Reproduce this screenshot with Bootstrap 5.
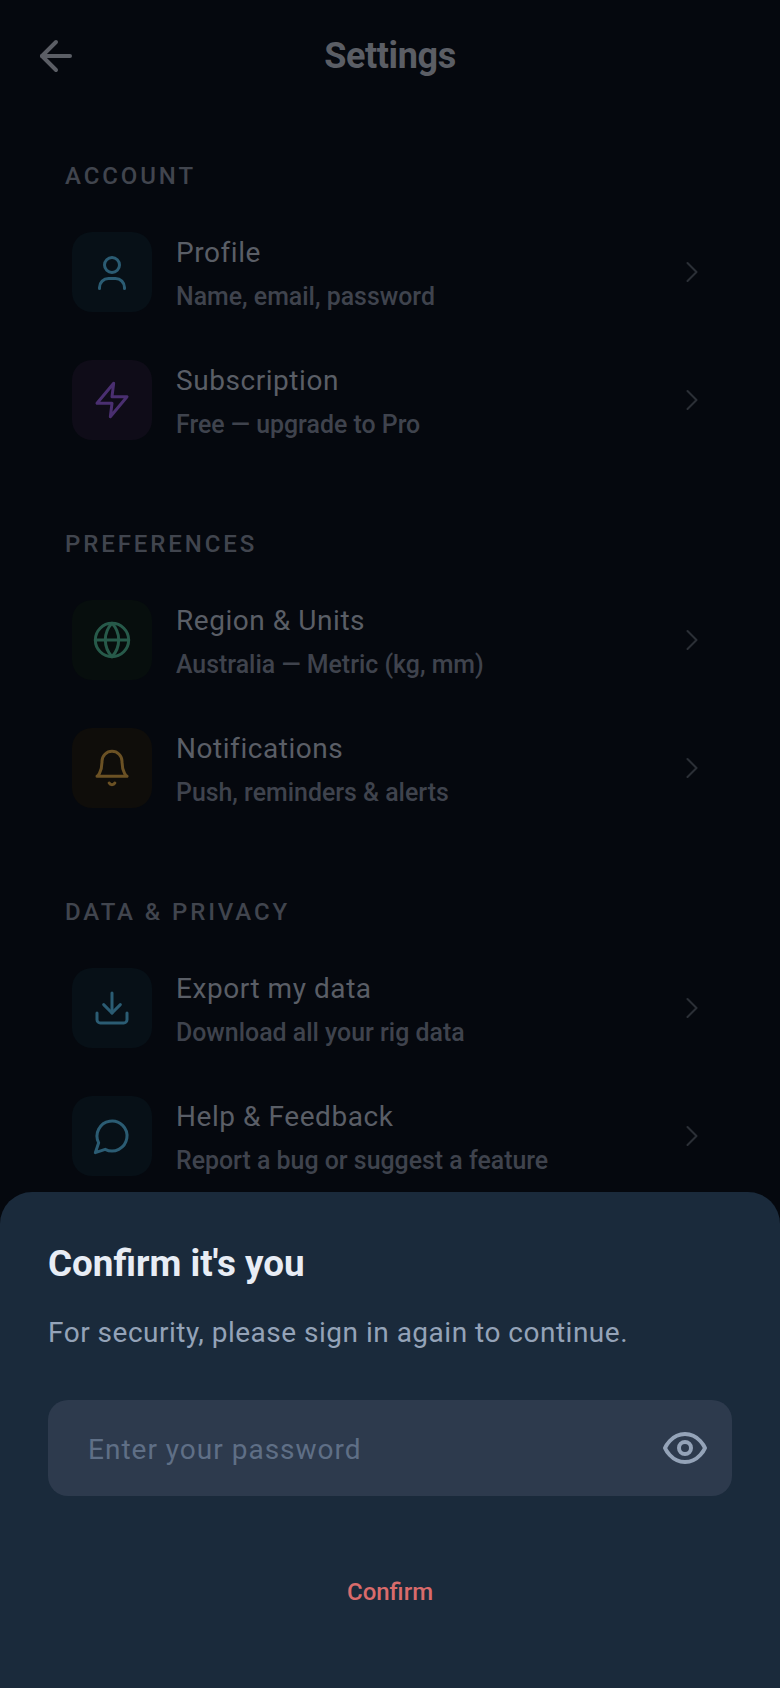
<!DOCTYPE html>
<html lang="en">
<head>
  <meta charset="UTF-8" />
  <meta name="viewport" content="width=device-width, initial-scale=1.0"/>
  <title>Settings</title>

  <link href="https://cdn.jsdelivr.net/npm/bootstrap@5.3.3/dist/css/bootstrap.min.css" rel="stylesheet"/>

  <style>
    html, body {
      height: 100%;
    }

    body {
      background: #05080e;
      font-family: Roboto, "Liberation Sans", sans-serif;
      overflow: hidden;
    }

    .screen {
      height: 1688px;
      overflow: hidden;
    }

    /* top bar */
    .top-bar {
      height: 112px;
      padding: 0 32px;
    }

    .top-title {
      color: #5b5e65;
      font-size: 36px;
      font-weight: 700;
      letter-spacing: -.4px;
      line-height: 40px;
      margin: 0;
    }

    .bar-side {
      width: 48px;
      height: 48px;
    }

    .back-icon {
      color: #5b5e65;
    }

    /* settings list */
    .settings-group {
      padding: 0 70px 0 65px;
      margin-bottom: 64px;
    }

    .settings-group:first-of-type {
      margin-top: 48px;
    }

    .group-label {
      color: #41454e;
      font-size: 24px;
      font-weight: 500;
      letter-spacing: 2.9px;
      line-height: 32px;
      margin-bottom: 16px;
    }

    .setting-row {
      height: 128px;
      padding-left: 7px;
      gap: 24px;
    }

    .tile {
      width: 80px;
      height: 80px;
      border-radius: 20px;
      flex-shrink: 0;
    }

    .tile-cyan { background: #071017; color: #2b5c73; }
    .tile-purple { background: #0f0c18; color: #4a2f70; }
    .tile-green { background: #070e0d; color: #275a4a; }
    .tile-amber { background: #0f0d0a; color: #6b5124; }

    .row-title {
      color: #5a5e66;
      font-size: 28px;
      line-height: 36px;
      letter-spacing: .55px;
      padding-top: 3px;
    }

    .row-sub {
      color: #3f434d;
      font-size: 24.9px;
      font-weight: 500;
      line-height: 32px;
      margin-top: 10px;
    }

    .chevron {
      color: #2b2f36;
      flex-shrink: 0;
    }

    /* password sheet */
    .scrim-sheet {
      height: 496px;
      background: #1a2a3b;
      border-radius: 32px 32px 0 0;
      padding: 48px 48px 0;
    }

    .sheet-title {
      color: #e8edf5;
      font-size: 36.8px;
      font-weight: 700;
      line-height: 48px;
      margin-bottom: 25px;
    }

    .sheet-text {
      color: #94a3b8;
      font-size: 28px;
      line-height: 40px;
      letter-spacing: .5px;
      margin-bottom: 47px;
    }

    .pass-field {
      height: 96px;
      background: #2d3a4d;
      border-radius: 20px;
      padding: 0 23px 0 40px;
    }

    .pass-input,
    .pass-input:focus {
      background: transparent;
      border: 0;
      box-shadow: none;
      color: #e8edf5;
      font-size: 28px;
      letter-spacing: 1px;
      padding: 3px 0 0;
    }

    .pass-input::placeholder {
      color: #5f6f86;
      opacity: 1;
    }

    .eye-icon {
      color: #94a3b8;
      flex-shrink: 0;
    }

    .confirm-btn,
    .confirm-btn:hover {
      color: #d96b6b;
      font-size: 24px;
      font-weight: 500;
      line-height: 32px;
      margin-top: 64px;
      padding: 16px 32px;
      border: 0;
    }

    svg.line-icon {
      fill: none;
      stroke: currentColor;
      stroke-linecap: round;
      stroke-linejoin: round;
    }
  </style>
</head>
<body>

  <div class="screen position-relative">

    <header class="top-bar d-flex align-items-center justify-content-between">
      <div class="bar-side back-icon">
        <svg class="line-icon" width="48" height="48" viewBox="0 0 24 24" stroke-width="2"><path d="m12 19-7-7 7-7"/><path d="M19 12H5"/></svg>
      </div>
      <h1 class="top-title">Settings</h1>
      <div class="bar-side"></div>
    </header>

    <section class="settings-group">
      <div class="group-label">ACCOUNT</div>

      <div class="setting-row d-flex align-items-center">
        <div class="tile tile-cyan d-flex align-items-center justify-content-center">
          <svg class="line-icon" width="40" height="40" viewBox="0 0 40 40" stroke-width="3"><circle cx="20" cy="13" r="7.5"/><path d="M7.5 36.500v-1a9 9 0 0 1 9-9h7a9 9 0 0 1 9 9v1"/></svg>
        </div>
        <div class="flex-grow-1">
          <div class="row-title">Profile</div>
          <div class="row-sub">Name, email, password</div>
        </div>
        <svg class="line-icon chevron" width="36" height="36" viewBox="0 0 24 24" stroke-width="1.4"><path d="m9 18 6-6-6-6"/></svg>
      </div>

      <div class="setting-row d-flex align-items-center">
        <div class="tile tile-purple d-flex align-items-center justify-content-center">
          <svg class="line-icon" width="40" height="40" viewBox="0 0 24 24" stroke-width="1.8"><polygon points="13 2 3 14 12 14 11 22 21 10 12 10 13 2"/></svg>
        </div>
        <div class="flex-grow-1">
          <div class="row-title">Subscription</div>
          <div class="row-sub">Free — upgrade to Pro</div>
        </div>
        <svg class="line-icon chevron" width="36" height="36" viewBox="0 0 24 24" stroke-width="1.4"><path d="m9 18 6-6-6-6"/></svg>
      </div>
    </section>

    <section class="settings-group">
      <div class="group-label">PREFERENCES</div>

      <div class="setting-row d-flex align-items-center">
        <div class="tile tile-green d-flex align-items-center justify-content-center">
          <svg class="line-icon" width="40" height="40" viewBox="0 0 24 24" stroke-width="1.8"><circle cx="12" cy="12" r="10"/><path d="M12 2a14.500 14.500 0 0 0 0 20 14.500 14.500 0 0 0 0-20"/><path d="M2 12h20"/></svg>
        </div>
        <div class="flex-grow-1">
          <div class="row-title">Region &amp; Units</div>
          <div class="row-sub">Australia — Metric (kg, mm)</div>
        </div>
        <svg class="line-icon chevron" width="36" height="36" viewBox="0 0 24 24" stroke-width="1.4"><path d="m9 18 6-6-6-6"/></svg>
      </div>

      <div class="setting-row d-flex align-items-center">
        <div class="tile tile-amber d-flex align-items-center justify-content-center">
          <svg class="line-icon" width="40" height="40" viewBox="0 0 24 24" stroke-width="1.8"><path d="M6 8a6 6 0 0 1 12 0c0 7 3 9 3 9H3s3-2 3-9"/><path d="M10.300 21a1.940 1.940 0 0 0 3.400 0"/></svg>
        </div>
        <div class="flex-grow-1">
          <div class="row-title">Notifications</div>
          <div class="row-sub">Push, reminders &amp; alerts</div>
        </div>
        <svg class="line-icon chevron" width="36" height="36" viewBox="0 0 24 24" stroke-width="1.4"><path d="m9 18 6-6-6-6"/></svg>
      </div>
    </section>

    <section class="settings-group">
      <div class="group-label">DATA &amp; PRIVACY</div>

      <div class="setting-row d-flex align-items-center">
        <div class="tile tile-cyan d-flex align-items-center justify-content-center">
          <svg class="line-icon" width="40" height="40" viewBox="0 0 24 24" stroke-width="1.8"><path d="M21 15v4a2 2 0 0 1-2 2H5a2 2 0 0 1-2-2v-4"/><polyline points="7 10 12 15 17 10"/><line x1="12" y1="15" x2="12" y2="3"/></svg>
        </div>
        <div class="flex-grow-1">
          <div class="row-title">Export my data</div>
          <div class="row-sub">Download all your rig data</div>
        </div>
        <svg class="line-icon chevron" width="36" height="36" viewBox="0 0 24 24" stroke-width="1.4"><path d="m9 18 6-6-6-6"/></svg>
      </div>

      <div class="setting-row d-flex align-items-center">
        <div class="tile tile-cyan d-flex align-items-center justify-content-center">
          <svg class="line-icon" width="40" height="40" viewBox="0 0 24 24" stroke-width="1.8"><path d="M7.900 20A9 9 0 1 0 4 16.100L2 22Z"/></svg>
        </div>
        <div class="flex-grow-1">
          <div class="row-title">Help &amp; Feedback</div>
          <div class="row-sub">Report a bug or suggest a feature</div>
        </div>
        <svg class="line-icon chevron" width="36" height="36" viewBox="0 0 24 24" stroke-width="1.4"><path d="m9 18 6-6-6-6"/></svg>
      </div>
    </section>

    <!-- bottom sheet, sits over the list -->
    <div class="scrim-sheet position-absolute bottom-0 start-0 end-0">
      <div class="sheet-title">Confirm it's you</div>
      <p class="sheet-text">For security, please sign in again to continue.</p>
      <div class="pass-field d-flex align-items-center gap-3">
        <input type="password" class="form-control pass-input" placeholder="Enter your password">
        <svg class="line-icon eye-icon" width="48" height="48" viewBox="0 0 24 24" stroke-width="2"><path d="M2 12s3-7 10-7 10 7 10 7-3 7-10 7-10-7-10-7Z"/><circle cx="12" cy="12" r="3"/></svg>
      </div>
      <div class="text-center">
        <button type="button" class="btn confirm-btn">Confirm</button>
      </div>
    </div>

  </div>

  <script src="https://cdn.jsdelivr.net/npm/bootstrap@5.3.3/dist/js/bootstrap.bundle.min.js"></script>
</body>
</html>
